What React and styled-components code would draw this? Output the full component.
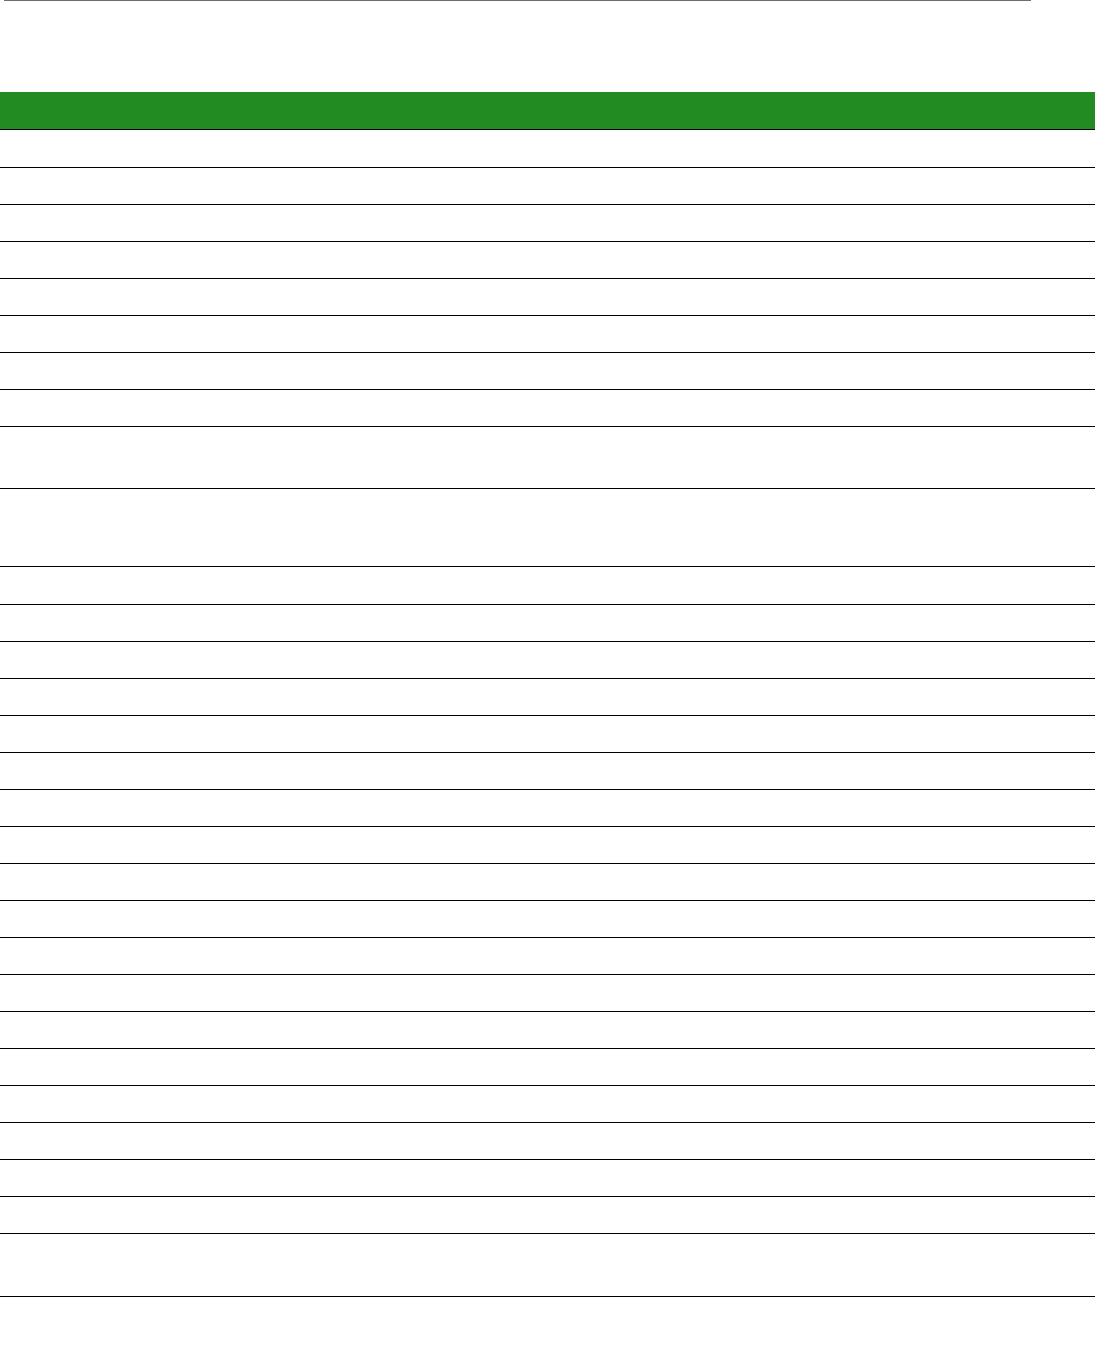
import React from 'react';
import styled, { createGlobalStyle } from 'styled-components';

const GlobalStyle = createGlobalStyle`
  html, body {
    margin: 0;
    padding: 0;
    background: #ffffff;
    font-family: "Liberation Sans", Arial, sans-serif;
  }
`;

// row heights (content only, the 1px border comes on top)
const rows = [
  37, 36, 36, 36, 36, 36, 36, 36,
  61, 77,
  37, 36, 36, 36, 36, 36, 36, 36, 36,
  36, 36, 36, 36, 36, 36, 36, 36, 36,
  62,
];

const App = () => {
  return (
    <StyledWrapper>
      <GlobalStyle />
      <TopRule />
      <Table>
        <HeaderRow />
        {rows.map((h, i) => (
          <Row key={i} $h={h} />
        ))}
      </Table>
    </StyledWrapper>
  );
};

const StyledWrapper = styled.div`
  width: 1095px;
  min-height: 1352px;
  background: #ffffff;
  display: flex;
  flex-direction: column;
`;

const TopRule = styled.div`
  height: 1px;
  margin: 0 64px 91px 4px;
  background: #6e6e6e;
`;

const Table = styled.div`
  display: flex;
  flex-direction: column;
  width: 100%;
`;

const HeaderRow = styled.div`
  height: 37px;
  background: #228b22;
  border-bottom: 1px solid #000000;
`;

const Row = styled.div`
  height: ${(p) => p.$h}px;
  border-bottom: 1px solid #000000;
`;

export default App;
